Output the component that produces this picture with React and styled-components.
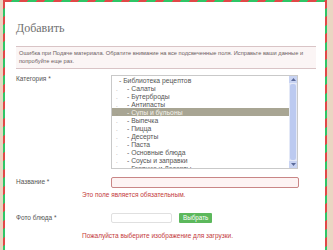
import React from "react";
import styled, { createGlobalStyle } from "styled-components";

const Global = createGlobalStyle`
  html, body { margin: 0; padding: 0; }
  body {
    background: #ead6c2;
    font-family: "Liberation Sans", Arial, sans-serif;
    overflow: hidden;
  }
`;

const Envelope = styled.div`
  margin-left: 3px;
  width: 320px;
  padding: 2px 2px 0 2px;
  background: repeating-linear-gradient(
    -45deg,
    #e04848 0 6px,
    #2fc566 6px 12px
  );
  min-height: 260px;
`;

const Sheet = styled.div`
  background: #fff;
  min-height: 258px;
  padding: 19px 9px 0 11px;
  box-sizing: border-box;
`;

const Title = styled.h2`
  margin: 0 0 11px 0;
  font-family: "Liberation Serif", "Times New Roman", serif;
  font-weight: normal;
  font-size: 12px;
  line-height: 14px;
  color: #707070;
`;

const Message = styled.div`
  border-top: 1px solid #d9c4c6;
  border-bottom: 1px solid #d9c4c6;
  background: #fbf5f5;
  padding: 2px 4px 3px 3px;
  font-size: 5.7px;
  line-height: 8px;
  color: #6b5d5f;
  margin-bottom: 6px;
`;

const Row = styled.div`
  display: grid;
  grid-template-columns: 95px 1fr;
  align-items: start;
`;

const Label = styled.div`
  font-size: 6.5px;
  line-height: 8px;
  color: #555;
  padding-top: ${(p) => p.$top || 0}px;
`;

const ListBox = styled.div`
  position: relative;
  width: 187px;
  height: 94px;
  border: 1px solid #c9c9c9;
  box-sizing: border-box;
  overflow: hidden;
  background: #fff;
`;

const Items = styled.div`
  margin-right: 8px;
`;

const Item = styled.div`
  display: flex;
  align-items: center;
  height: 8px;
  font-size: 6.8px;
  color: ${(p) => (p.$selected ? "#f4f2ea" : "#555")};
  background: ${(p) => (p.$selected ? "#a8a593" : "transparent")};
  white-space: nowrap;
  padding-left: ${(p) => (p.$root ? 7 : 4)}px;
`;

const Dot = styled.span`
  width: 11px;
  font-size: 6px;
  color: #888;
  line-height: 8px;
  transform: translateY(1px);
`;

const Scrollbar = styled.div`
  position: absolute;
  top: 0;
  right: 0;
  bottom: 0;
  width: 8px;
  background: #e4e9f7;
  display: flex;
  flex-direction: column;
  align-items: center;
`;

const Arrow = styled.div`
  width: 8px;
  height: 7px;
  display: flex;
  align-items: center;
  justify-content: center;
  background: #c8d3f2;
`;

const Thumb = styled.div`
  flex: 1;
  width: 6px;
  margin: 1px 0;
  background: #bccaf0;
  border-radius: 2px;
`;

const Error = styled.div`
  font-size: 6.5px;
  line-height: 8px;
  color: #c43a3a;
  padding-left: 66px;
`;

const TextInput = styled.div`
  width: 188px;
  height: 11px;
  border: 1px solid #c98686;
  border-radius: 2px;
  background: #fdf3f3;
  box-sizing: border-box;
`;

const FileRow = styled.div`
  display: flex;
  align-items: center;
  gap: 7px;
`;

const FileBox = styled.div`
  width: 61px;
  height: 10px;
  border: 1px solid #e0e0e0;
  border-radius: 2px;
  box-sizing: border-box;
`;

const Button = styled.div`
  background: #5cb85c;
  color: #fff;
  font-size: 6.3px;
  height: 10px;
  line-height: 10px;
  padding: 0 4px;
  border-radius: 1px;
`;

const items = [
  { t: "- Библиотека рецептов", root: true },
  { t: "- Салаты" },
  { t: "- Бутерброды" },
  { t: "- Антипасты" },
  { t: "- Супы и бульоны", sel: true },
  { t: "- Выпечка" },
  { t: "- Пицца" },
  { t: "- Десерты" },
  { t: "- Паста" },
  { t: "- Основные блюда" },
  { t: "- Соусы и заправки" },
  { t: "- Горячие и Десерты" },
];

export default function App() {
  return (
    <>
      <Global />
      <Envelope>
        <Sheet>
          <Title>Добавить</Title>
          <Message>
            Ошибка при Подаче материала. Обратите внимание на все подсвеченные поля. Исправьте ваши данные и попробуйте еще раз.
          </Message>
          <Row style={{ marginBottom: 8 }}>
            <Label $top={0}>Категория *</Label>
            <ListBox>
              <Items>
                {items.map((it, i) => (
                  <Item key={i} $selected={it.sel} $root={it.root}>
                    {!it.root && <Dot>.</Dot>}
                    {it.t}
                  </Item>
                ))}
              </Items>
              <Scrollbar>
                <Arrow>
                  <svg width="5" height="3" viewBox="0 0 5 3"><path d="M0 3 L2.5 0 L5 3Z" fill="#5a6a9a" /></svg>
                </Arrow>
                <Thumb />
                <Arrow>
                  <svg width="5" height="3" viewBox="0 0 5 3"><path d="M0 0 L2.5 3 L5 0Z" fill="#5a6a9a" /></svg>
                </Arrow>
              </Scrollbar>
            </ListBox>
          </Row>
          <Row style={{ marginBottom: 3 }}>
            <Label $top={1}>Название *</Label>
            <TextInput />
          </Row>
          <Error style={{ marginBottom: 14 }}>Это поле является обязательным.</Error>
          <Row style={{ marginBottom: 9 }}>
            <Label $top={1}>Фото блюда *</Label>
            <FileRow>
              <FileBox />
              <Button>Выбрать</Button>
            </FileRow>
          </Row>
          <Error>Пожалуйста выберите изображение для загрузки.</Error>
        </Sheet>
      </Envelope>
    </>
  );
}
